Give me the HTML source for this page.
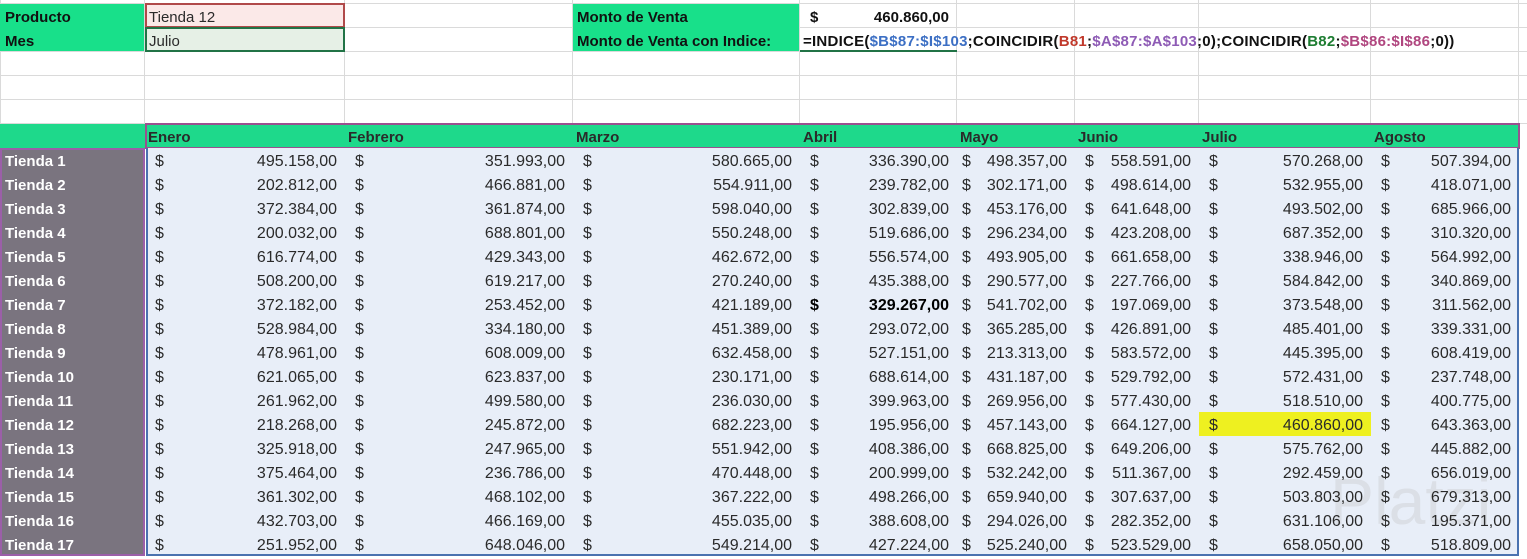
<!DOCTYPE html>
<html><head><meta charset="utf-8"><style>
*{margin:0;padding:0;box-sizing:border-box}
body{width:1527px;height:557px;background:#fff;position:relative;overflow:hidden;font-family:"Liberation Sans",sans-serif;font-size:16px;color:#2a2a2a}
.vl{position:absolute;top:0;width:1px;height:124px;background:#dadada}
.hl{position:absolute;left:0;width:1527px;height:1px;background:#dadada}
.r{position:absolute;left:0;height:24px;display:flex;line-height:27px;white-space:nowrap}
.c{position:relative;height:24px;text-align:right;padding-right:8px}
.c .d{position:absolute;left:10px;top:0}
.a{width:145px;text-align:left;padding-left:5px;color:#fff;font-weight:bold;font-size:15px}
.b{width:200px}.cc{width:228px}.dd{width:227px}.e{width:157px}.f{width:118px}.g{width:124px}.h{width:172px}.i{width:148px}
.f .d{left:5px}
.hdr .c{text-align:left;padding-left:3px;font-weight:bold;font-size:15px}
</style></head><body>
<div class="hl" style="top:3px"></div><div class="hl" style="top:27px"></div><div class="hl" style="top:51px"></div><div class="hl" style="top:75px"></div><div class="hl" style="top:99px"></div><div class="hl" style="top:123px"></div>
<div class="vl" style="left:0"></div><div class="vl" style="left:144px"></div><div class="vl" style="left:344px"></div><div class="vl" style="left:572px"></div><div class="vl" style="left:799px"></div><div class="vl" style="left:956px"></div><div class="vl" style="left:1074px"></div><div class="vl" style="left:1198px"></div><div class="vl" style="left:1370px"></div><div class="vl" style="left:1518px"></div>

<div style="position:absolute;left:0;top:4px;width:144px;height:47px;background:#18e08a"></div>
<div style="position:absolute;left:573px;top:4px;width:226px;height:47px;background:#18e08a"></div>
<div style="position:absolute;left:145px;top:3px;width:200px;height:25px;background:#fbe9e8;border:2px solid #b04a4a"></div>
<div style="position:absolute;left:145px;top:27px;width:200px;height:25px;background:#e6f0e6;border:2px solid #217346"></div>
<div style="position:absolute;left:800px;top:50px;width:157px;height:2px;background:#217346"></div>

<div class="r" style="top:4px;font-size:15px"><div class="c a" style="color:#111">Producto</div><div class="c b" style="text-align:left;padding-left:4px">Tienda 12</div><div class="c cc"></div><div class="c dd" style="text-align:left;padding-left:4px;font-weight:bold;color:#111">Monto de Venta</div><div class="c e" style="font-weight:bold;color:#111"><span class="d">$</span>460.860,00</div></div>
<div class="r" style="top:28px;font-size:15px"><div class="c a" style="color:#111">Mes</div><div class="c b" style="text-align:left;padding-left:4px">Julio</div><div class="c cc"></div><div class="c dd" style="text-align:left;padding-left:4px;font-weight:bold;color:#111">Monto de Venta con Indice:</div><div style="padding-left:3px;font-weight:bold;font-size:15px;letter-spacing:0.25px;color:#111">=INDICE(<span style="color:#3c6fc4">$B$87:$I$103</span>;COINCIDIR(<span style="color:#c0392b">B81</span>;<span style="color:#8e5bb5">$A$87:$A$103</span>;0);COINCIDIR(<span style="color:#1e7d32">B82</span>;<span style="color:#b0467f">$B$86:$I$86</span>;0))</div></div>

<div style="position:absolute;left:0;top:124px;width:1519px;height:24px;background:#1ed98b"></div>
<div style="position:absolute;left:145px;top:123px;width:1375px;height:26px;border:2px solid #9b4f8f"></div>
<div style="position:absolute;left:0;top:148px;width:145px;height:408px;background:#7a747f;border:2px solid #9b5fa8"></div>
<div style="position:absolute;left:146px;top:148px;width:1373px;height:408px;background:#e8eef8;border:2px solid #4a72b0;border-top:none"></div>
<div style="position:absolute;left:1199px;top:412px;width:172px;height:24px;background:#eef020"></div>
<div style="position:absolute;left:1330px;top:468px;font-size:66px;color:rgba(190,190,190,0.3);line-height:1">Platzi</div>

<div class="r hdr" style="top:124px"><div class="c a"></div><div class="c b">Enero</div><div class="c cc">Febrero</div><div class="c dd">Marzo</div><div class="c e">Abril</div><div class="c f">Mayo</div><div class="c g">Junio</div><div class="c h">Julio</div><div class="c i">Agosto</div></div>

<div class="r" style="top:148px"><div class="c a">Tienda 1</div><div class="c b"><span class="d">$</span>495.158,00</div><div class="c cc"><span class="d">$</span>351.993,00</div><div class="c dd"><span class="d">$</span>580.665,00</div><div class="c e"><span class="d">$</span>336.390,00</div><div class="c f"><span class="d">$</span>498.357,00</div><div class="c g"><span class="d">$</span>558.591,00</div><div class="c h"><span class="d">$</span>570.268,00</div><div class="c i"><span class="d">$</span>507.394,00</div></div>
<div class="r" style="top:172px"><div class="c a">Tienda 2</div><div class="c b"><span class="d">$</span>202.812,00</div><div class="c cc"><span class="d">$</span>466.881,00</div><div class="c dd"><span class="d">$</span>554.911,00</div><div class="c e"><span class="d">$</span>239.782,00</div><div class="c f"><span class="d">$</span>302.171,00</div><div class="c g"><span class="d">$</span>498.614,00</div><div class="c h"><span class="d">$</span>532.955,00</div><div class="c i"><span class="d">$</span>418.071,00</div></div>
<div class="r" style="top:196px"><div class="c a">Tienda 3</div><div class="c b"><span class="d">$</span>372.384,00</div><div class="c cc"><span class="d">$</span>361.874,00</div><div class="c dd"><span class="d">$</span>598.040,00</div><div class="c e"><span class="d">$</span>302.839,00</div><div class="c f"><span class="d">$</span>453.176,00</div><div class="c g"><span class="d">$</span>641.648,00</div><div class="c h"><span class="d">$</span>493.502,00</div><div class="c i"><span class="d">$</span>685.966,00</div></div>
<div class="r" style="top:220px"><div class="c a">Tienda 4</div><div class="c b"><span class="d">$</span>200.032,00</div><div class="c cc"><span class="d">$</span>688.801,00</div><div class="c dd"><span class="d">$</span>550.248,00</div><div class="c e"><span class="d">$</span>519.686,00</div><div class="c f"><span class="d">$</span>296.234,00</div><div class="c g"><span class="d">$</span>423.208,00</div><div class="c h"><span class="d">$</span>687.352,00</div><div class="c i"><span class="d">$</span>310.320,00</div></div>
<div class="r" style="top:244px"><div class="c a">Tienda 5</div><div class="c b"><span class="d">$</span>616.774,00</div><div class="c cc"><span class="d">$</span>429.343,00</div><div class="c dd"><span class="d">$</span>462.672,00</div><div class="c e"><span class="d">$</span>556.574,00</div><div class="c f"><span class="d">$</span>493.905,00</div><div class="c g"><span class="d">$</span>661.658,00</div><div class="c h"><span class="d">$</span>338.946,00</div><div class="c i"><span class="d">$</span>564.992,00</div></div>
<div class="r" style="top:268px"><div class="c a">Tienda 6</div><div class="c b"><span class="d">$</span>508.200,00</div><div class="c cc"><span class="d">$</span>619.217,00</div><div class="c dd"><span class="d">$</span>270.240,00</div><div class="c e"><span class="d">$</span>435.388,00</div><div class="c f"><span class="d">$</span>290.577,00</div><div class="c g"><span class="d">$</span>227.766,00</div><div class="c h"><span class="d">$</span>584.842,00</div><div class="c i"><span class="d">$</span>340.869,00</div></div>
<div class="r" style="top:292px"><div class="c a">Tienda 7</div><div class="c b"><span class="d">$</span>372.182,00</div><div class="c cc"><span class="d">$</span>253.452,00</div><div class="c dd"><span class="d">$</span>421.189,00</div><div class="c e" style="font-weight:bold;color:#000"><span class="d">$</span>329.267,00</div><div class="c f"><span class="d">$</span>541.702,00</div><div class="c g"><span class="d">$</span>197.069,00</div><div class="c h"><span class="d">$</span>373.548,00</div><div class="c i"><span class="d">$</span>311.562,00</div></div>
<div class="r" style="top:316px"><div class="c a">Tienda 8</div><div class="c b"><span class="d">$</span>528.984,00</div><div class="c cc"><span class="d">$</span>334.180,00</div><div class="c dd"><span class="d">$</span>451.389,00</div><div class="c e"><span class="d">$</span>293.072,00</div><div class="c f"><span class="d">$</span>365.285,00</div><div class="c g"><span class="d">$</span>426.891,00</div><div class="c h"><span class="d">$</span>485.401,00</div><div class="c i"><span class="d">$</span>339.331,00</div></div>
<div class="r" style="top:340px"><div class="c a">Tienda 9</div><div class="c b"><span class="d">$</span>478.961,00</div><div class="c cc"><span class="d">$</span>608.009,00</div><div class="c dd"><span class="d">$</span>632.458,00</div><div class="c e"><span class="d">$</span>527.151,00</div><div class="c f"><span class="d">$</span>213.313,00</div><div class="c g"><span class="d">$</span>583.572,00</div><div class="c h"><span class="d">$</span>445.395,00</div><div class="c i"><span class="d">$</span>608.419,00</div></div>
<div class="r" style="top:364px"><div class="c a">Tienda 10</div><div class="c b"><span class="d">$</span>621.065,00</div><div class="c cc"><span class="d">$</span>623.837,00</div><div class="c dd"><span class="d">$</span>230.171,00</div><div class="c e"><span class="d">$</span>688.614,00</div><div class="c f"><span class="d">$</span>431.187,00</div><div class="c g"><span class="d">$</span>529.792,00</div><div class="c h"><span class="d">$</span>572.431,00</div><div class="c i"><span class="d">$</span>237.748,00</div></div>
<div class="r" style="top:388px"><div class="c a">Tienda 11</div><div class="c b"><span class="d">$</span>261.962,00</div><div class="c cc"><span class="d">$</span>499.580,00</div><div class="c dd"><span class="d">$</span>236.030,00</div><div class="c e"><span class="d">$</span>399.963,00</div><div class="c f"><span class="d">$</span>269.956,00</div><div class="c g"><span class="d">$</span>577.430,00</div><div class="c h"><span class="d">$</span>518.510,00</div><div class="c i"><span class="d">$</span>400.775,00</div></div>
<div class="r" style="top:412px"><div class="c a">Tienda 12</div><div class="c b"><span class="d">$</span>218.268,00</div><div class="c cc"><span class="d">$</span>245.872,00</div><div class="c dd"><span class="d">$</span>682.223,00</div><div class="c e"><span class="d">$</span>195.956,00</div><div class="c f"><span class="d">$</span>457.143,00</div><div class="c g"><span class="d">$</span>664.127,00</div><div class="c h"><span class="d">$</span>460.860,00</div><div class="c i"><span class="d">$</span>643.363,00</div></div>
<div class="r" style="top:436px"><div class="c a">Tienda 13</div><div class="c b"><span class="d">$</span>325.918,00</div><div class="c cc"><span class="d">$</span>247.965,00</div><div class="c dd"><span class="d">$</span>551.942,00</div><div class="c e"><span class="d">$</span>408.386,00</div><div class="c f"><span class="d">$</span>668.825,00</div><div class="c g"><span class="d">$</span>649.206,00</div><div class="c h"><span class="d">$</span>575.762,00</div><div class="c i"><span class="d">$</span>445.882,00</div></div>
<div class="r" style="top:460px"><div class="c a">Tienda 14</div><div class="c b"><span class="d">$</span>375.464,00</div><div class="c cc"><span class="d">$</span>236.786,00</div><div class="c dd"><span class="d">$</span>470.448,00</div><div class="c e"><span class="d">$</span>200.999,00</div><div class="c f"><span class="d">$</span>532.242,00</div><div class="c g"><span class="d">$</span>511.367,00</div><div class="c h"><span class="d">$</span>292.459,00</div><div class="c i"><span class="d">$</span>656.019,00</div></div>
<div class="r" style="top:484px"><div class="c a">Tienda 15</div><div class="c b"><span class="d">$</span>361.302,00</div><div class="c cc"><span class="d">$</span>468.102,00</div><div class="c dd"><span class="d">$</span>367.222,00</div><div class="c e"><span class="d">$</span>498.266,00</div><div class="c f"><span class="d">$</span>659.940,00</div><div class="c g"><span class="d">$</span>307.637,00</div><div class="c h"><span class="d">$</span>503.803,00</div><div class="c i"><span class="d">$</span>679.313,00</div></div>
<div class="r" style="top:508px"><div class="c a">Tienda 16</div><div class="c b"><span class="d">$</span>432.703,00</div><div class="c cc"><span class="d">$</span>466.169,00</div><div class="c dd"><span class="d">$</span>455.035,00</div><div class="c e"><span class="d">$</span>388.608,00</div><div class="c f"><span class="d">$</span>294.026,00</div><div class="c g"><span class="d">$</span>282.352,00</div><div class="c h"><span class="d">$</span>631.106,00</div><div class="c i"><span class="d">$</span>195.371,00</div></div>
<div class="r" style="top:532px"><div class="c a">Tienda 17</div><div class="c b"><span class="d">$</span>251.952,00</div><div class="c cc"><span class="d">$</span>648.046,00</div><div class="c dd"><span class="d">$</span>549.214,00</div><div class="c e"><span class="d">$</span>427.224,00</div><div class="c f"><span class="d">$</span>525.240,00</div><div class="c g"><span class="d">$</span>523.529,00</div><div class="c h"><span class="d">$</span>658.050,00</div><div class="c i"><span class="d">$</span>518.809,00</div></div>
</body></html>
